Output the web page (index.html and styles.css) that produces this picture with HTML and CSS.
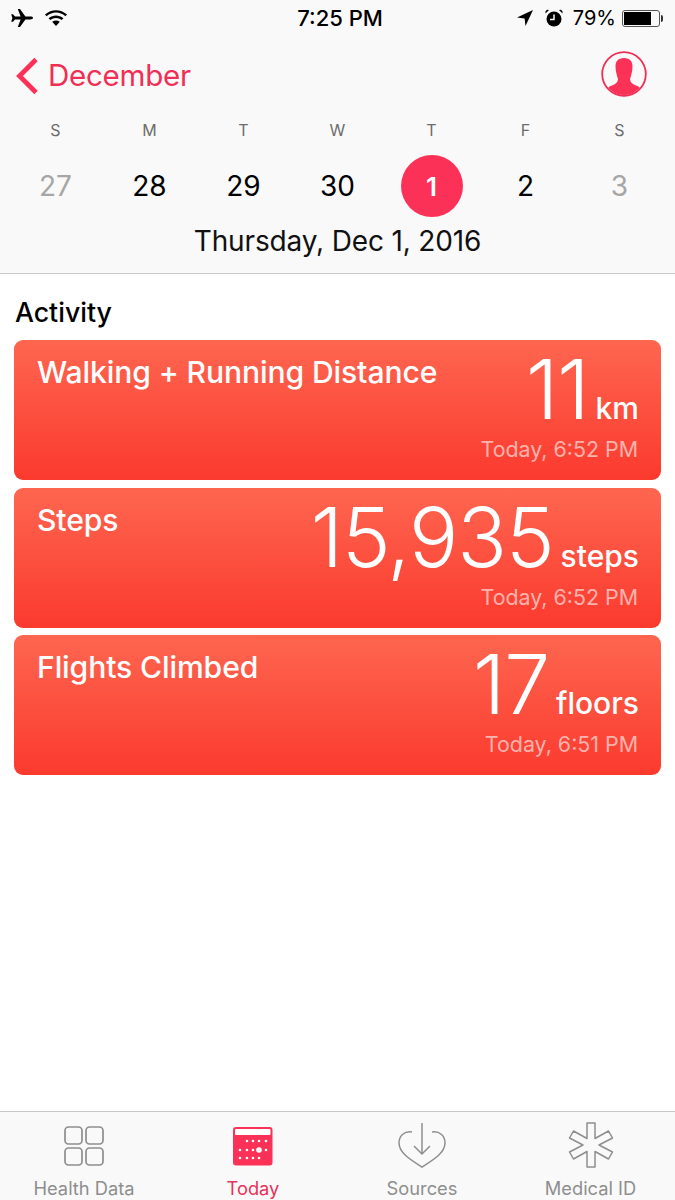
FILE: index.html
```html
<!DOCTYPE html>
<html lang="en">
<head>
<meta charset="utf-8">
<title>Health</title>
<link rel="stylesheet" href="styles.css">
</head>
<body>
<div class="phone">
  <header class="top">
    <div class="status">
      <div class="status-side">
        <svg class="i-plane" width="24" height="18" viewBox="0 0 24 18"><path d="M23 9c0-.9-1.200-1.400-2.600-1.400h-5L10 0H7.800l2.800 7.600H5L3 5.200H1.200L2.400 9 1.200 12.800H3L5 10.400h5.600L7.800 18H10l5.400-7.600h5C21.800 10.400 23 9.900 23 9z"/></svg>
        <svg class="i-wifi" width="24" height="18" viewBox="0 0 24 18"><path d="M1 5.500C7.500-.2 16.500-.2 23 5.500l-1.600 1.700C15.800 2.400 8.200 2.400 2.600 7.200z"/><path d="M4.600 9.200c4.400-3.700 10.400-3.700 14.800 0l-1.700 1.800c-3.400-2.700-8-2.700-11.400 0z"/><path d="M8.200 12.800c2.300-1.800 5.300-1.800 7.600 0L12 17z"/></svg>
      </div>
      <div class="clock">7:25 PM</div>
      <div class="status-side status-right">
        <svg class="i-loc" width="16" height="16" viewBox="0 0 16 16"><path d="M16 0L0 7.500l7.600.9.900 7.600z"/></svg>
        <svg class="i-alarm" width="18" height="18" viewBox="0 0 18 18"><circle cx="9" cy="10" r="7.500"/><path d="M9 5.500V10.500H5" fill="none" stroke="#f9f9f9" stroke-width="1.500"/><path d="M.5 4.500L4 1 2 .8.500 2.300zM17.500 4.500L14 1l2-.2 1.500 1.500z"/></svg>
        <span class="pct">79%</span>
        <div class="battery"><div class="battery-fill"></div></div>
      </div>
    </div>
    <div class="nav">
      <div class="back">
        <svg width="24" height="38" viewBox="0 0 24 38"><path d="M21 2.500L4.500 19 21 35.500" fill="none" stroke="#fc3158" stroke-width="4.800"/></svg>
        <span class="back-label">December</span>
      </div>
      <svg class="avatar" width="46" height="46" viewBox="0 0 46 46">
        <defs><clipPath id="avatar-clip"><circle cx="23" cy="23" r="21"/></clipPath></defs>
        <circle cx="23" cy="23" r="21.800" fill="none" stroke="#f02f55" stroke-width="1.800"/>
        <path clip-path="url(#avatar-clip)" d="M23 7C29 7 31.500 10.500 31.500 15.500C31.500 20 30 25 29 28C29 31 31 33 35 34.500C38 35.500 39.500 37 41 40V46H5V40C6.500 37 8 35.500 11 34.500C15 33 17 31 17 28C16 25 14.500 20 14.500 15.500C14.500 10.500 17 7 23 7z" fill="#fc3158"/>
      </svg>
    </div>
    <div class="week">
      <span class="wd">S</span><span class="wd">M</span><span class="wd">T</span><span class="wd">W</span><span class="wd">T</span><span class="wd">F</span><span class="wd">S</span>
    </div>
    <div class="days">
      <span class="d muted">27</span><span class="d">28</span><span class="d">29</span><span class="d">30</span><span class="d"><b class="today">1</b></span><span class="d">2</span><span class="d muted">3</span>
    </div>
    <div class="date">Thursday, Dec 1, 2016</div>
  </header>

  <main class="content">
    <h2 class="section">Activity</h2>
    <div class="cards">
      <article class="card">
        <div class="card-title">Walking + Running Distance</div>
        <div class="card-right">
          <div class="reading"><span class="num">11</span><span class="unit">km</span></div>
          <div class="when">Today, 6:52 PM</div>
        </div>
      </article>
      <article class="card">
        <div class="card-title">Steps</div>
        <div class="card-right">
          <div class="reading"><span class="num">15,935</span><span class="unit">steps</span></div>
          <div class="when">Today, 6:52 PM</div>
        </div>
      </article>
      <article class="card">
        <div class="card-title">Flights Climbed</div>
        <div class="card-right">
          <div class="reading"><span class="num">17</span><span class="unit">floors</span></div>
          <div class="when">Today, 6:51 PM</div>
        </div>
      </article>
    </div>
  </main>

  <nav class="tabs">
    <div class="tab">
      <svg width="42" height="42" viewBox="0 0 42 42" fill="none" stroke="#8e8e8e" stroke-width="1.700"><rect x="2" y="2" width="17" height="17" rx="3.500"/><rect x="23" y="2" width="17" height="17" rx="3.500"/><rect x="2" y="23" width="17" height="17" rx="3.500"/><rect x="23" y="23" width="17" height="17" rx="3.500"/></svg>
      <span>Health Data</span>
    </div>
    <div class="tab tab-on">
      <svg width="42" height="42" viewBox="0 0 42 42"><rect x="1" y="2" width="39.500" height="38.500" rx="3" fill="#fc3158"/><rect x="3" y="4" width="35.500" height="6" rx="1" fill="#fff"/><g fill="#fff"><circle cx="15" cy="16" r="1.300"/><circle cx="21" cy="16" r="1.300"/><circle cx="27" cy="16" r="1.300"/><circle cx="34" cy="16" r="1.300"/><circle cx="8" cy="25" r="1.300"/><circle cx="15" cy="25" r="1.300"/><circle cx="21" cy="25" r="1.300"/><circle cx="27" cy="25" r="2.800"/><circle cx="34" cy="25" r="1.300"/><circle cx="8" cy="33" r="1.300"/><circle cx="15" cy="33" r="1.300"/><circle cx="21" cy="33" r="1.300"/><circle cx="27" cy="33" r="1.300"/></g></svg>
      <span>Today</span>
    </div>
    <div class="tab tab-tall">
      <svg width="50" height="46" viewBox="0 0 50 46" fill="none" stroke="#8e8e8e" stroke-width="1.500"><path d="M15 10C7 9 2 14 2 21c0 10 12 17 23 24 11-7 23-14 23-24 0-7-5-12-13-11"/><path d="M25 1v30M17 24l8 8 8-8" /></svg>
      <span>Sources</span>
    </div>
    <div class="tab tab-tall">
      <svg width="46" height="46" viewBox="0 0 46 46" fill="none" stroke="#8e8e8e" stroke-width="1.500" stroke-linejoin="round"><path d="M19 1h8v15.500L40.500 9l4 7L31 23l13.500 7-4 7L27 29.500V45h-8V29.500L5.500 37l-4-7L15 23 1.500 16l4-7L19 16.500z"/></svg>
      <span>Medical ID</span>
    </div>
  </nav>
</div>
</body>
</html>
```
FILE: styles.css
```css
* { box-sizing: border-box; margin: 0; padding: 0; }
html, body { background: #fff; }
body { font-family: Inter, "Liberation Sans", sans-serif; color: #000; }
.phone { width: 675px; height: 1200px; display: flex; flex-direction: column; overflow: hidden; }

.top { height: 274px; background: #f9f9f9; border-bottom: 1px solid #c9c9c9; }
.status { height: 36px; padding: 0 15px 0 10px; display: grid; grid-template-columns: 1fr auto 1fr; align-items: center; }
.status-side { display: flex; align-items: center; gap: 10px; }
.status-right { justify-content: flex-end; gap: 11px; }
.clock { font-size: 22px; font-weight: 500; padding-left: 10px; }
.pct { font-size: 20px; font-weight: 400; margin-left: -1px; }
.i-loc { margin-right: 1px; }
.battery { width: 38px; height: 17px; border: 1px solid #555; border-radius: 3px; padding: 1px; position: relative; margin-left: -5px; }
.battery::after { content: ""; position: absolute; right: -4px; top: 4px; width: 2px; height: 7px; background: #333; border-radius: 0 2px 2px 0; }
.battery-fill { width: 80%; height: 100%; background: #000; }

.nav { height: 76px; padding: 0 28px 0 15px; display: flex; align-items: center; justify-content: space-between; }
.back { display: flex; align-items: center; gap: 9px; color: #f02f55; font-size: 29.600px; letter-spacing: -.3px; margin-top: 4px; }
.back-label { margin-top: -2px; }
.avatar { display: block; }

.week, .days { display: grid; grid-template-columns: repeat(7, 94px); justify-content: center; text-align: center; }
.week { height: 26px; align-items: center; font-size: 16px; color: #6c6c6c; margin-top: 5px; }
.days { height: 64px; margin-top: 11px; align-items: center; font-size: 28px; }
.d { display: flex; justify-content: center; }
.muted { color: #a6a6a6; }
.today { width: 62px; height: 62px; border-radius: 50%; background: #fc3158; color: #fff; font-weight: 600; display: flex; align-items: center; justify-content: center; font-size: 26px; }
.date { text-align: center; font-size: 28px; line-height: 36px; margin-top: 5px; letter-spacing: -.15px; color: #111; }

.content { flex: 1; padding: 0 14px; }
.section { font-size: 26.700px; font-weight: 500; line-height: 34px; padding: 21px 1px 0; height: 66px; }
.cards { display: flex; flex-direction: column; gap: 7.500px; }
.card { height: 140px; border-radius: 9px; background: linear-gradient(#fe6650, #fb3a2e); color: #fff; padding: 14px 22px 0 23px; display: flex; justify-content: space-between; align-items: flex-start; }
.card-title { font-size: 30.100px; font-weight: 500; line-height: 36px; letter-spacing: -.1px; white-space: nowrap; }
.card-right { display: flex; flex-direction: column; align-items: flex-end; }
.reading { display: flex; align-items: baseline; gap: 7px; height: 81px; margin-top: -5px; }
.num { font-size: 82px; font-weight: 300; line-height: 81px; letter-spacing: -1px; }
.unit { font-size: 30px; font-weight: 500; }
.when { font-size: 21.400px; color: rgba(255,255,255,.6); line-height: 28px; margin: 5px 1px 0 0; }

.tabs { height: 89px; flex: none; background: #f9f9f9; border-top: 1px solid #c9c9c9; display: grid; grid-template-columns: 168px 170px 168px 169px; }
.tab { display: flex; flex-direction: column; align-items: center; justify-content: flex-end; color: #8e8e8e; font-size: 18.300px; position: relative; height: 88px; overflow: hidden; }
.tab span { line-height: 24px; }
.tab svg { display: block; margin-bottom: 9px; }
.tab-tall svg { margin-bottom: 8px; }
.tab-on { color: #e8325a; }
```
